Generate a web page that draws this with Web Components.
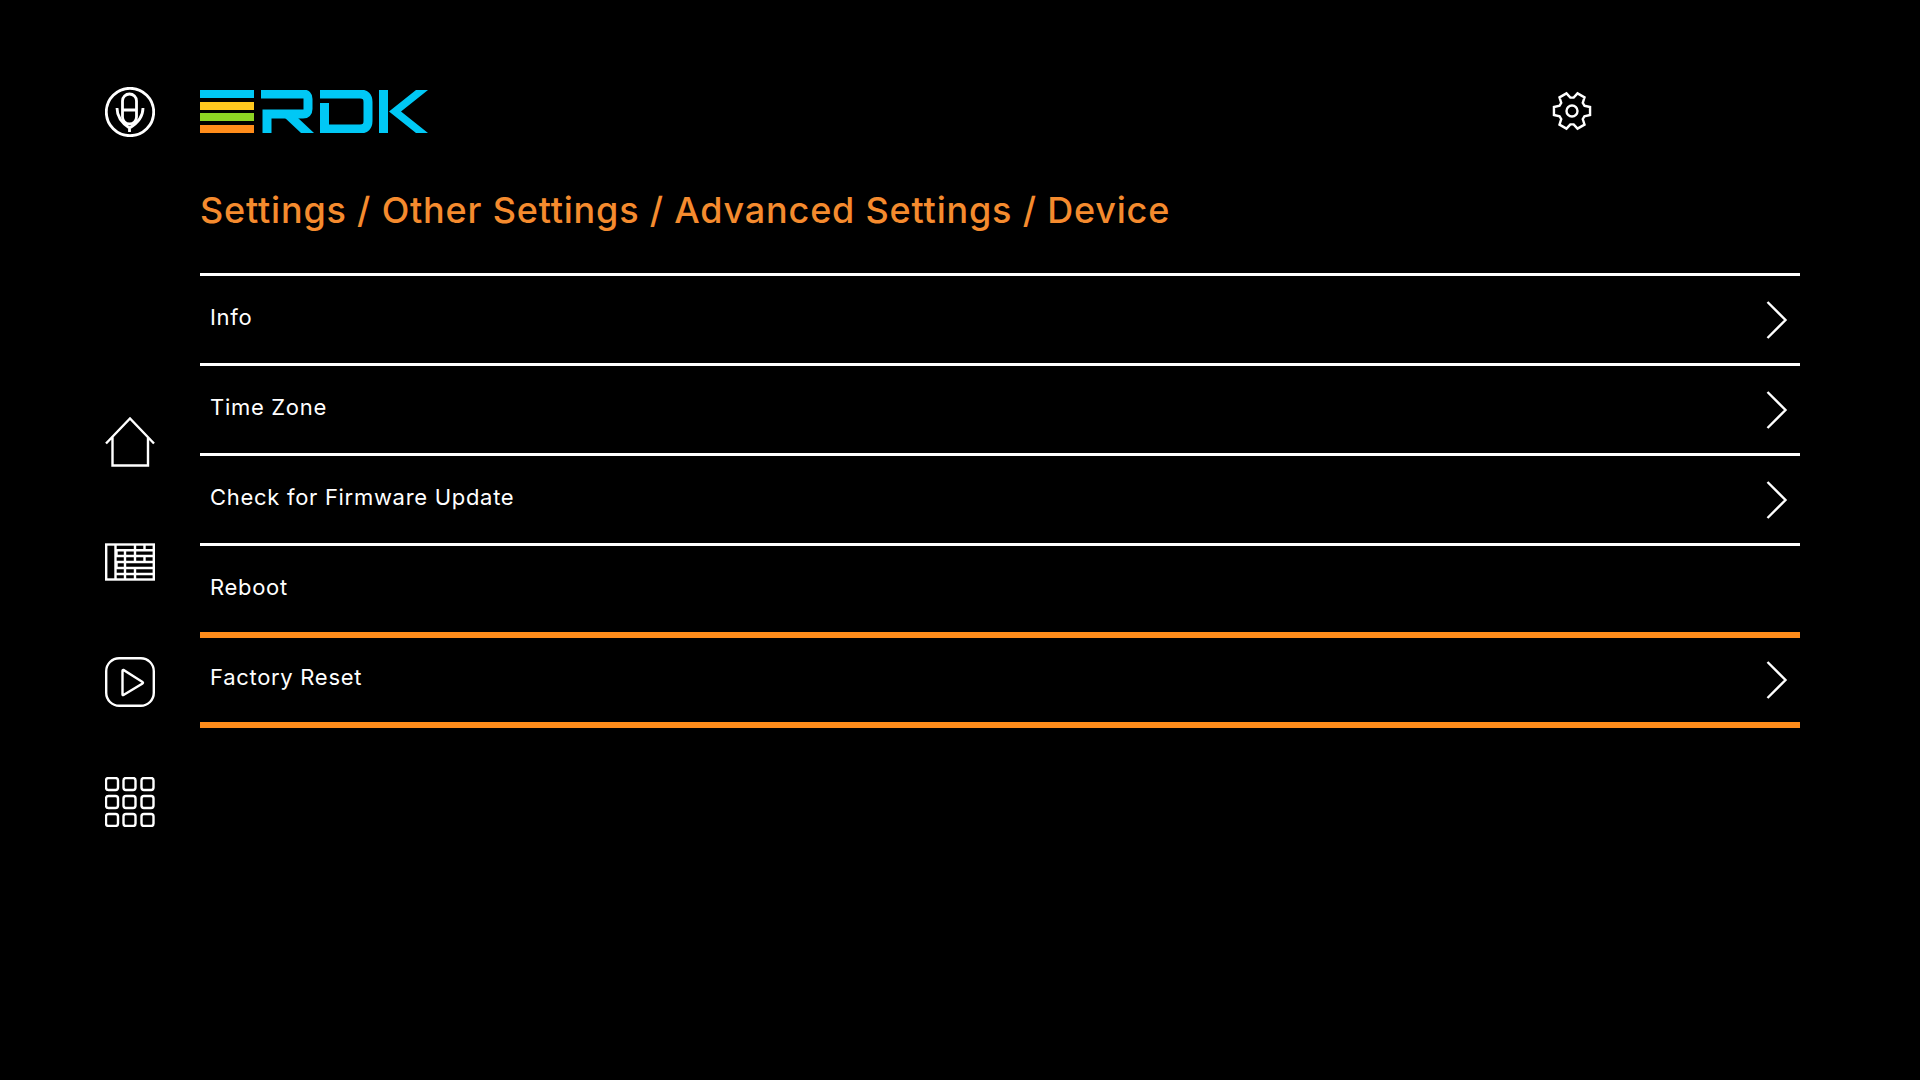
<!DOCTYPE html>
<html>
<head>
<meta charset="utf-8">
<title>Device settings</title>
<style>
  html, body { margin: 0; background: #000; }
  body { width: 1920px; height: 1080px; overflow: hidden; font-family: Inter, "Liberation Sans", sans-serif; }
</style>
</head>
<body>
<rdk-app>
  <rdk-menu-row arrow>Info</rdk-menu-row>
  <rdk-menu-row arrow>Time Zone</rdk-menu-row>
  <rdk-menu-row arrow>Check for Firmware Update</rdk-menu-row>
  <rdk-menu-row>Reboot</rdk-menu-row>
  <rdk-menu-row arrow focused>Factory Reset</rdk-menu-row>
</rdk-app>

<script>
// icon bodies, all drawn in a 50x50 box with white strokes
const ICONS = {
  mic: `<g stroke-width="2.800"><circle cx="25" cy="25" r="23.700"/>
        <rect x="17.500" y="7" width="14" height="30" rx="7"/>
        <path d="M17.500 23H31.500M12 21Q12 33 24.500 41Q38 33 38 21M24.500 41V45"/></g>`,
  home: `<path d="M1 26.500L25 1.500L49 26.500M7.500 20V48.500H43V20"/>`,
  guide: `<rect x="1.200" y="7.500" width="47.600" height="35"/>
          <path d="M10.500 7.500V42.500M10.500 13.300H48.800M10.500 19H48.800M10.500 25H48.800M10.500 31H48.800M10.500 37H48.800"/>
          <path d="M30 7.500V13.300M39.500 7.500V13.300M11.500 13.300V19M20 13.300V19M30 13.300V19M20 19V25M30 19V25M39.500 19V25M11.500 25V31M20 25V31M20 31V37M30 31V37M20 37V42.500M30 37V42.500"/>`,
  play: `<rect x="1.200" y="1.200" width="47.600" height="47.600" rx="13"/>
         <path d="M17.500 14V37.500Q17.500 38.500 18.500 38L37.500 26.500Q38.500 25.500 37.500 25L18.500 13Q17.500 12.800 17.500 14Z"/>`,
  apps: `<rect x="1" y="1" width="12" height="12" rx="2.500"/><rect x="18.500" y="1" width="12" height="12" rx="2.500"/><rect x="36.500" y="1" width="12" height="12" rx="2.500"/>
         <rect x="1" y="19" width="12" height="12" rx="2.500"/><rect x="18.500" y="19" width="12" height="12" rx="2.500"/><rect x="36.500" y="19" width="12" height="12" rx="2.500"/>
         <rect x="1" y="37" width="12" height="12" rx="2.500"/><rect x="18.500" y="37" width="12" height="12" rx="2.500"/><rect x="36.500" y="37" width="12" height="12" rx="2.500"/>`
};

// six toothed gear outline, easier to compute than to write out by hand
function gearPath(cx, cy) {
  let d = '';
  for (let i = 0; i < 6; i++) {
    const a = i * Math.PI / 3;
    const pts = [[13.500, -0.400], [18.500, -0.220], [18.500, 0.220], [13.500, 0.400]];
    pts.forEach(([r, off], n) => {
      const x = cx + r * Math.cos(a + off);
      const y = cy + r * Math.sin(a + off);
      d += (i === 0 && n === 0 ? 'M' : 'L') + x.toFixed(2) + ' ' + y.toFixed(2);
    });
  }
  return d + 'Z';
}

class RdkIcon extends HTMLElement {
  connectedCallback() {
    const name = this.getAttribute('name');
    const body = name === 'gear'
      ? `<path d="${gearPath(25, 25)}"/><circle cx="25" cy="25" r="5.500"/>`
      : ICONS[name];
    this.attachShadow({mode: 'open'}).innerHTML = `
      <style>
        :host { display: block; width: 50px; height: 50px; }
        svg { display: block; fill: none; stroke: #fff; stroke-width: 2.400; }
      </style>
      <svg width="50" height="50" viewBox="0 0 50 50">${body}</svg>`;
  }
}
customElements.define('rdk-icon', RdkIcon);

class RdkLogo extends HTMLElement {
  constructor() {
    super();
    this.attachShadow({mode: 'open'}).innerHTML = `
      <style>
        :host { display: block; width: 228px; height: 43px; }
        svg { display: block; }
        .word { fill: none; stroke: #00c8f5; stroke-width: 9; }
      </style>
      <svg width="228" height="43" viewBox="0 0 228 43">
        <rect x="0" y="0" width="54" height="8" fill="#00c8f5"/>
        <rect x="0" y="12" width="54" height="8" fill="#ffc81e"/>
        <rect x="0" y="23" width="54" height="8" fill="#8ed424"/>
        <rect x="0" y="35" width="54" height="8" fill="#ff8c1a"/>
        <path class="word" d="M67 43V24H103Q108 24 108 19V9Q108 4 103 4H61"/>
        <path d="M84 27H97L114 43H101Z" fill="#00c8f5"/>
        <path class="word" d="M124.500 13V39H160Q168 39 168 31V12Q168 4 160 4H120"/>
        <path class="word" d="M183.500 0V43"/>
        <path d="M189 21.500L216 0H228L201 21.500L228 43H216Z" fill="#00c8f5"/>
      </svg>`;
  }
}
customElements.define('rdk-logo', RdkLogo);

class RdkMenuRow extends HTMLElement {
  constructor() {
    super();
    this.attachShadow({mode: 'open'}).innerHTML = `
      <style>
        :host {
          display: flex; align-items: center; position: relative;
          box-sizing: border-box; height: 90px;
          padding: 0 10px 5px 10px;
          border-bottom: 3px solid #fff;
          color: #fff; font-size: 22px; letter-spacing: 0.7px;
        }
        :host(:last-child) { border-bottom-color: transparent; }
        .label { flex: 1; }
        svg { display: none; fill: none; stroke: #fff; stroke-width: 2.400; margin: 5px 2px 0 0; }
        :host([arrow]) svg { display: block; }
        :host([focused])::before, :host([focused])::after {
          content: ""; position: absolute; left: 0; right: 0; height: 6px; background: #ff8c1a;
        }
        :host([focused])::before { top: -4px; }
        :host([focused])::after { top: 86px; }
      </style>
      <span class="label"><slot></slot></span>
      <svg width="22" height="38" viewBox="0 0 22 38"><path d="M1.500 1L19.500 19L1.500 37"/></svg>`;
  }
}
customElements.define('rdk-menu-row', RdkMenuRow);

class RdkApp extends HTMLElement {
  constructor() {
    super();
    this.attachShadow({mode: 'open'}).innerHTML = `
      <style>
        :host { display: flex; width: 1920px; height: 1080px; }
        .side {
          box-sizing: border-box; width: 200px; padding: 87px 0 0 105px;
          display: flex; flex-direction: column; gap: 70px;
        }
        .side .home { margin-top: 210px; }
        .main { box-sizing: border-box; width: 1600px; padding-top: 90px; }
        .top { display: flex; align-items: center; height: 43px; }
        .top rdk-icon { margin-left: 1119px; transform: translateY(-1px); }
        h1 {
          margin: 0; height: 140px; box-sizing: border-box; padding-top: 52px;
          font: 500 36px/50px Inter, "Liberation Sans", sans-serif;
          color: #f58b2e; letter-spacing: 0.8px;
        }
        .list { border-top: 3px solid #fff; }
      </style>
      <div class="side">
        <rdk-icon name="mic"></rdk-icon>
        <rdk-icon class="home" name="home"></rdk-icon>
        <rdk-icon name="guide"></rdk-icon>
        <rdk-icon name="play"></rdk-icon>
        <rdk-icon name="apps"></rdk-icon>
      </div>
      <div class="main">
        <div class="top">
          <rdk-logo></rdk-logo>
          <rdk-icon name="gear"></rdk-icon>
        </div>
        <h1>Settings / Other Settings / Advanced Settings / Device</h1>
        <div class="list"><slot></slot></div>
      </div>`;
  }
}
customElements.define('rdk-app', RdkApp);
</script>
</body>
</html>
